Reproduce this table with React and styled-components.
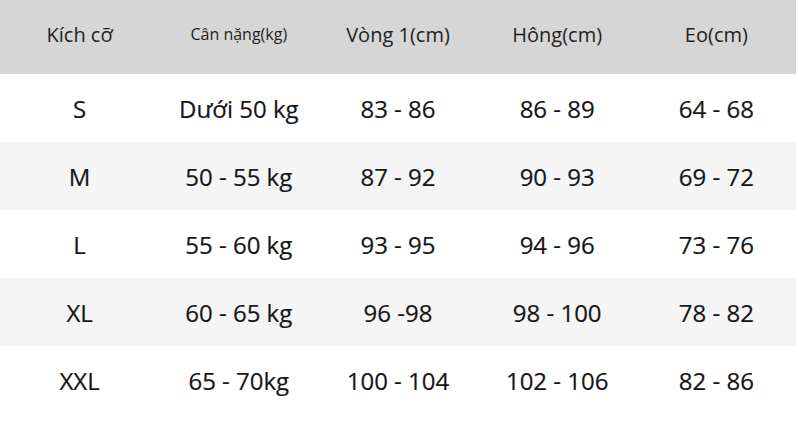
import React from "react";
import styled, { createGlobalStyle } from "styled-components";

const GlobalStyle = createGlobalStyle`
  html, body {
    margin: 0;
    padding: 0;
    background: #fff;
  }
  body {
    font-family: "Open Sans", "Noto Sans", Arial, sans-serif;
    color: #1c1c1c;
  }
`;

const rows = [
  ["S", "Dưới 50 kg", "83 - 86", "86 - 89", "64 - 68"],
  ["M", "50 - 55 kg", "87 - 92", "90 - 93", "69 - 72"],
  ["L", "55 - 60 kg", "93 - 95", "94 - 96", "73 - 76"],
  ["XL", "60 - 65 kg", "96 -98", "98 - 100", "78 - 82"],
  ["XXL", "65 - 70kg", "100 - 104", "102 - 106", "82 - 86"],
];

const App = () => {
  return (
    <>
      <GlobalStyle />
      <Chart>
        <HeadRow>
          <HeadCell>Kích cỡ</HeadCell>
          <HeadCell $small>Cân nặng(kg)</HeadCell>
          <HeadCell>Vòng 1(cm)</HeadCell>
          <HeadCell>Hông(cm)</HeadCell>
          <HeadCell>Eo(cm)</HeadCell>
        </HeadRow>
        {rows.map((r, i) => (
          <Row key={r[0]} $shade={i % 2 === 1}>
            {r.map((v, j) => (
              <Cell key={j}>{v}</Cell>
            ))}
          </Row>
        ))}
      </Chart>
    </>
  );
};

export default App;

const Chart = styled.div`
  width: 796px;
  height: 428px;
  display: flex;
  flex-direction: column;
`;

const HeadRow = styled.div`
  display: grid;
  grid-template-columns: repeat(5, 1fr);
  align-items: center;
  height: 74px;
  background: #d6d6d6;
`;

const HeadCell = styled.div`
  text-align: center;
  font-size: ${(p) => (p.$small ? "16px" : "20px")};
  color: #1f1f1f;
  padding-bottom: 6px;
`;

const Row = styled.div`
  display: grid;
  grid-template-columns: repeat(5, 1fr);
  align-items: center;
  height: 68px;
  background: ${(p) => (p.$shade ? "#f5f5f5" : "#ffffff")};
`;

const Cell = styled.div`
  text-align: center;
  font-size: 24px;
  color: #161616;
  -webkit-text-stroke: 0.2px #161616;
`;
